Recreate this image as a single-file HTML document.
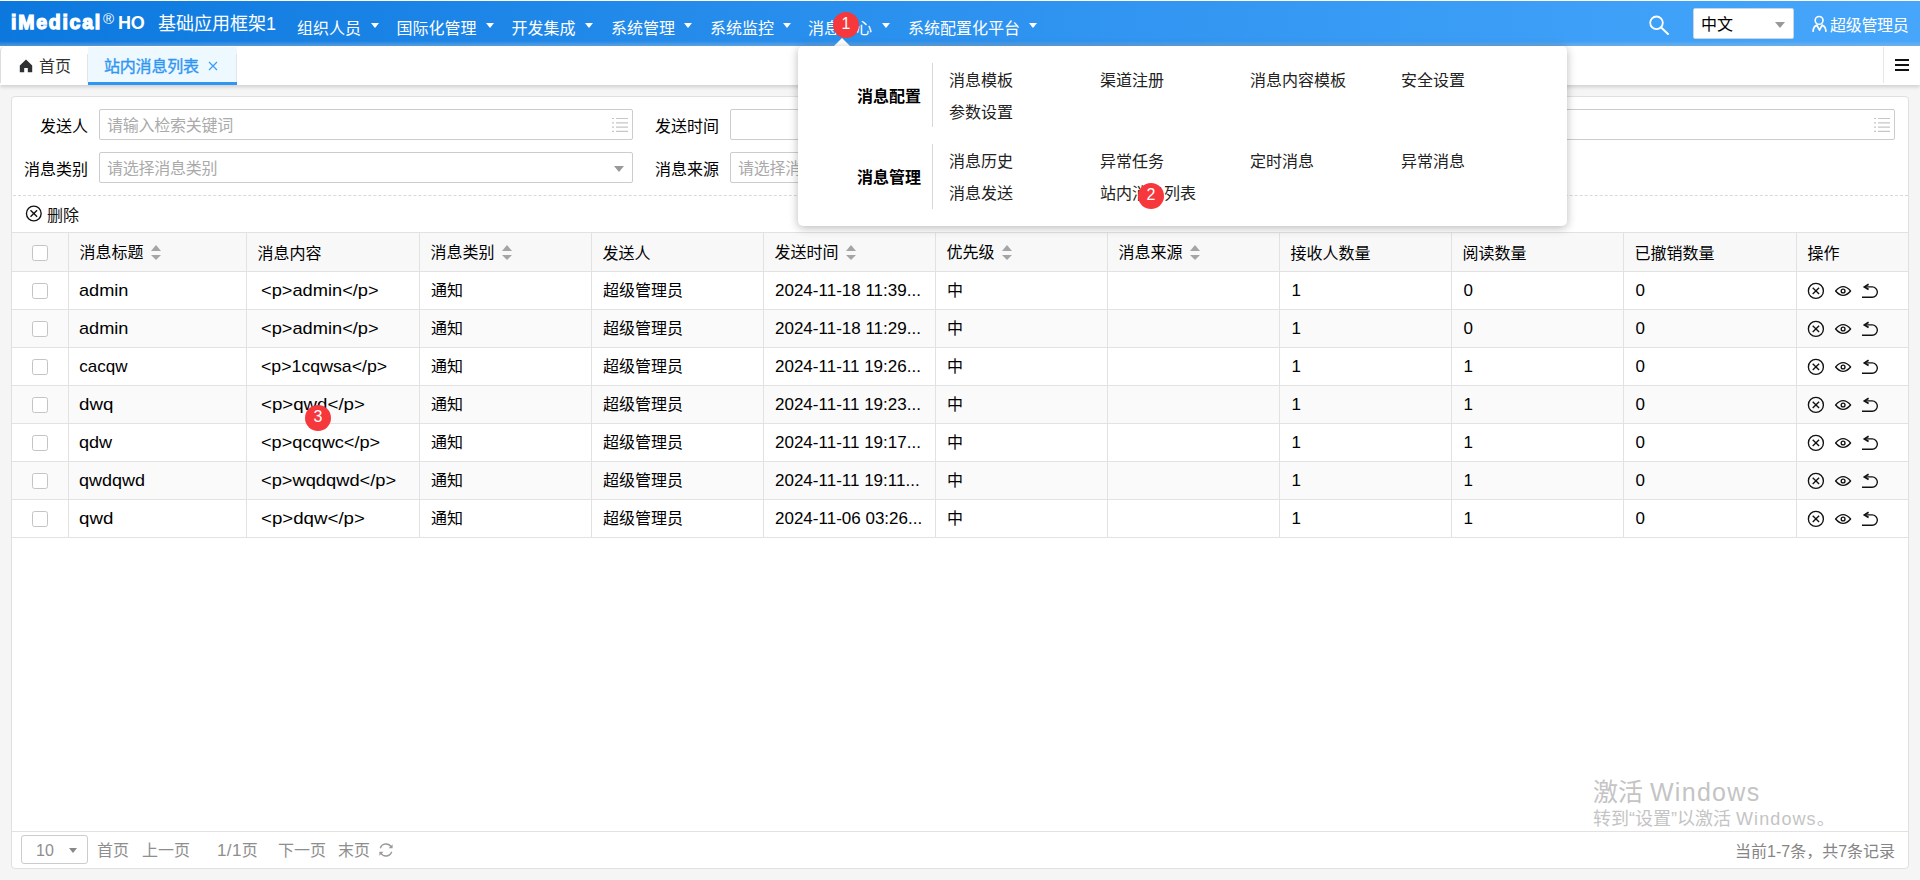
<!DOCTYPE html>
<html lang="zh-CN">
<head>
<meta charset="utf-8">
<title>站内消息列表</title>
<style>
*{box-sizing:border-box;margin:0;padding:0}
html,body{width:1920px;height:880px;overflow:hidden}
body{position:relative;background:#f5f5f5;font-family:"Liberation Sans","Noto Sans CJK SC",sans-serif;font-size:16px;color:#000;line-height:1}
.abs{position:absolute;white-space:nowrap}
/* header */
#hd{position:absolute;left:0;top:0;width:1920px;height:46px;background:linear-gradient(90deg,#0c78de 0%,#2a90ee 45%,#46a6fb 100%);color:#fff}
#hd .nav{position:absolute;top:20px;height:18px;line-height:18px;font-size:16px;white-space:nowrap}
#hd .car{position:absolute;top:23px;width:0;height:0;border-left:4.5px solid transparent;border-right:4.5px solid transparent;border-top:5px solid #fff}
/* tabs */
#tabs{position:absolute;left:0;top:46px;width:1920px;height:39px;background:#fff;box-shadow:0 2px 4px rgba(0,0,0,.16)}
/* panel */
#panel{position:absolute;left:11px;top:96px;width:1898px;height:773px;background:#fff;border:1px solid #e0e0e0;border-radius:4px}
.inp{position:absolute;height:31px;border:1px solid #ccc;border-radius:2px;background:#fff}
.lbl{position:absolute;height:20px;line-height:20px;font-size:16px;text-align:right;white-space:nowrap}
.ph{position:absolute;left:7px;top:7px;line-height:18px;font-size:16px;color:#aaa;letter-spacing:-0.25px;white-space:nowrap}
/* table */
.hl{position:absolute;left:12px;width:1896px;height:1px;background:#e2e2e2}
.vl{position:absolute;top:233px;width:1px;height:305px;background:#e2e2e2}
.row{position:absolute;left:12px;width:1896px;height:37px}
.cell{position:absolute;height:20px;line-height:20px;font-size:16px;white-space:nowrap}
.lt{font-size:17px;transform-origin:0 50%}
.cb{position:absolute;left:32px;width:16px;height:16px;border:1px solid #c4c4c4;border-radius:2.5px;background:#fff}
.sort{position:absolute;width:10px;height:15px}
.sort:before{content:"";position:absolute;left:0;top:0;border-left:5px solid transparent;border-right:5px solid transparent;border-bottom:6px solid #a5a5a5}
.sort:after{content:"";position:absolute;left:0;top:10px;border-left:5px solid transparent;border-right:5px solid transparent;border-top:5px solid #a5a5a5}
.badge{position:absolute;width:26px;height:26px;border-radius:13px;background:#f6373b;color:#fff;font-size:16px;line-height:24px;text-align:center}
/* popup */
#pop{position:absolute;left:798px;top:46px;width:769px;height:180px;color:#222;background:#fff;border-radius:5px;box-shadow:0 2px 10px rgba(0,0,0,.28)}
#pop .t{position:absolute;color:#000;font-weight:bold;font-size:16px;line-height:20px;white-space:nowrap}
#pop .i{position:absolute;font-size:16px;line-height:20px;white-space:nowrap}
#pop .d{position:absolute;left:134px;width:1px;background:#d8d8d8}
.pg{position:absolute;top:841px;height:20px;line-height:20px;font-size:16px;color:#8e8e8e;white-space:nowrap}
</style>
</head>
<body>
<!-- HEADER -->
<div id="hd">
  <div class="abs" id="logo1" style="left:11px;top:9.5px;font-size:19.5px;line-height:24px;font-weight:bold;letter-spacing:1.75px;-webkit-text-stroke:1.25px #fff">iMedical</div>
  <div class="abs" id="logo2" style="left:103px;top:11px;font-size:15px;line-height:16px">®</div>
  <div class="abs" id="logo3" style="left:118px;top:14px;font-size:18px;line-height:18px;font-weight:bold;letter-spacing:-0.3px">HO</div>
  <div class="abs" id="title" style="left:158px;top:13px;font-size:18px;line-height:22px">基础应用框架1</div>
  <div class="nav" style="left:297px">组织人员</div><div class="car" style="left:370.5px"></div>
  <div class="nav" style="left:396.5px">国际化管理</div><div class="car" style="left:486px"></div>
  <div class="nav" style="left:511.5px">开发集成</div><div class="car" style="left:584.5px"></div>
  <div class="nav" style="left:611px">系统管理</div><div class="car" style="left:684px"></div>
  <div class="nav" style="left:710px">系统监控</div><div class="car" style="left:783px"></div>
  <div class="nav" style="left:808px">消息中心</div><div class="car" style="left:882px"></div>
  <div class="nav" style="left:908px">系统配置化平台</div><div class="car" style="left:1028.5px"></div>
  <svg class="abs" style="left:1648px;top:14px" width="22" height="22" viewBox="0 0 22 22"><circle cx="8.5" cy="8.8" r="6.3" fill="none" stroke="#fff" stroke-width="1.8"/><path d="M13.2 13.6 L20 20" stroke="#fff" stroke-width="2" stroke-linecap="round"/></svg>
  <div class="abs" style="left:1693px;top:8px;width:101px;height:31px;background:#fff;border:1px solid #c9d6e2;border-radius:2px"></div>
  <div class="abs" style="left:1701px;top:15px;font-size:16px;line-height:20px;color:#000">中文</div>
  <div class="abs" style="left:1775px;top:22px;width:0;height:0;border-left:5px solid transparent;border-right:5px solid transparent;border-top:6px solid #999"></div>
  <svg class="abs" style="left:1806px;top:12px" width="28" height="24" viewBox="0 0 28 24"><circle cx="13.1" cy="8.4" r="3.9" fill="none" stroke="#fff" stroke-width="1.6"/><path d="M7 19.9 C7.2 16 8.8 13.8 10.9 13.1 L13.5 18.2 L16.1 13.1 C18.2 13.8 19.8 16 20 19.9" fill="none" stroke="#fff" stroke-width="1.65" stroke-linejoin="round"/></svg>
  <div class="abs" style="left:1830px;top:16px;font-size:16px;line-height:20px;letter-spacing:-0.3px">超级管理员</div>
</div>
<div class="abs" style="left:0;top:0;width:1920px;height:1px;background:#fff"></div>
<div class="abs" style="left:0;top:41px;width:1920px;height:5px;background:linear-gradient(180deg,rgba(175,195,215,0),rgba(175,195,215,.44))"></div>
<!-- TABS -->
<div id="tabs">
  <div class="abs" style="left:0;top:1px;width:8px;height:36px;border-left:1px solid #ddd;border-top-left-radius:4px"></div>
  <svg class="abs" style="left:19px;top:13px" width="14" height="14" viewBox="0 0 14 14"><path d="M7 0.6 L13.2 6.6 V13.2 H8.8 V9 H5.2 V13.2 H0.8 V6.6 Z" fill="#303133"/></svg>
  <div class="abs" style="left:39px;top:11px;font-size:16px;line-height:20px;color:#333">首页</div>
  <div class="abs" style="left:87px;top:8px;width:1px;height:28px;background:#e4e4e4"></div>
  <div class="abs" style="left:88px;top:1px;width:149px;height:38px;background:#eef8ff;border-bottom:3px solid #2f96f3"></div>
  <div class="abs" style="left:236px;top:8px;width:1px;height:28px;background:#e4e4e4"></div>
  <div class="abs" style="left:104px;top:11px;font-size:16px;line-height:20px;color:#2f96f3;letter-spacing:-0.2px;-webkit-text-stroke:0.35px #2f96f3">站内消息列表</div>
  <svg class="abs" style="left:208px;top:15px" width="10" height="10" viewBox="0 0 10 10"><path d="M1 1 L9 9 M9 1 L1 9" stroke="#3a9bf2" stroke-width="1.2"/></svg>
  <div class="abs" style="left:1883px;top:1px;width:1px;height:36px;background:#e6e6e6"></div>
  <div class="abs" style="left:1895px;top:13px;width:14px;height:2.4px;background:#111"></div>
  <div class="abs" style="left:1895px;top:18px;width:14px;height:2.4px;background:#111"></div>
  <div class="abs" style="left:1895px;top:23px;width:14px;height:2.4px;background:#111"></div>
</div>
<!-- PANEL -->
<div id="panel"></div>
<div id="form">
  <div class="lbl" style="left:20px;width:68px;top:117px">发送人</div>
  <div class="inp" style="left:99px;top:109px;width:534px"><div class="ph">请输入检索关键词</div>
    <svg class="abs" style="left:511px;top:6px" width="18" height="18" viewBox="0 0 18 18"><g stroke="#c6c6c6" stroke-width="1.2"><path d="M5 2.5H17M5 6.8H17M5 11.1H17M5 15.4H17"/><path d="M1 2.5H3M1 6.8H3M1 11.1H3M1 15.4H3"/></g></svg></div>
  <div class="lbl" style="left:20px;width:68px;top:160px">消息类别</div>
  <div class="inp" style="left:99px;top:152px;width:534px"><div class="ph">请选择消息类别</div>
    <div class="abs" style="left:514px;top:13px;width:0;height:0;border-left:5px solid transparent;border-right:5px solid transparent;border-top:6px solid #999"></div></div>
  <div class="lbl" style="left:651px;width:68px;top:117px">发送时间</div>
  <div class="inp" style="left:730px;top:109px;width:534px"></div>
  <div class="lbl" style="left:651px;width:68px;top:160px">消息来源</div>
  <div class="inp" style="left:730px;top:152px;width:534px"><div class="ph">请选择消息来源</div>
    <div class="abs" style="left:514px;top:13px;width:0;height:0;border-left:5px solid transparent;border-right:5px solid transparent;border-top:6px solid #999"></div></div>
  <div class="inp" style="left:1361px;top:109px;width:534px">
    <svg class="abs" style="left:511px;top:6px" width="18" height="18" viewBox="0 0 18 18"><g stroke="#c6c6c6" stroke-width="1.2"><path d="M5 2.5H17M5 6.8H17M5 11.1H17M5 15.4H17"/><path d="M1 2.5H3M1 6.8H3M1 11.1H3M1 15.4H3"/></g></svg></div>
  <div class="abs" style="left:13px;top:195px;width:1895px;height:0;border-top:1px dashed #d9d9d9"></div>
  <svg class="abs" style="left:25px;top:205px" width="17" height="17" viewBox="0 0 17 17"><circle cx="8.8" cy="8.5" r="7.35" fill="none" stroke="#111" stroke-width="1.35"/><path d="M5.5 5.2 L12.1 11.8 M12.1 5.2 L5.5 11.8" stroke="#111" stroke-width="1.35"/></svg>
  <div class="abs" style="left:47px;top:206px;font-size:16px;line-height:20px;color:#111">删除</div>
</div>
<div id="table">
<div class="row" style="top:233px;height:38px;background:#f8f8f8"></div>
<div class="row" style="top:272px;background:#fff"></div>
<div class="row" style="top:310px;background:#fafafa"></div>
<div class="row" style="top:348px;background:#fff"></div>
<div class="row" style="top:386px;background:#fafafa"></div>
<div class="row" style="top:424px;background:#fff"></div>
<div class="row" style="top:462px;background:#fafafa"></div>
<div class="row" style="top:500px;background:#fff"></div>
<div class="hl" style="top:232px"></div>
<div class="hl" style="top:271px"></div>
<div class="hl" style="top:309px"></div>
<div class="hl" style="top:347px"></div>
<div class="hl" style="top:385px"></div>
<div class="hl" style="top:423px"></div>
<div class="hl" style="top:461px"></div>
<div class="hl" style="top:499px"></div>
<div class="hl" style="top:537px"></div>
<div class="vl" style="left:68px"></div>
<div class="vl" style="left:246px"></div>
<div class="vl" style="left:419px"></div>
<div class="vl" style="left:591px"></div>
<div class="vl" style="left:763px"></div>
<div class="vl" style="left:935px"></div>
<div class="vl" style="left:1107px"></div>
<div class="vl" style="left:1279px"></div>
<div class="vl" style="left:1451px"></div>
<div class="vl" style="left:1623px"></div>
<div class="vl" style="left:1796px"></div>
<div class="cb" style="top:245px"></div>
<div class="cell hc" style="left:79.5px;top:242.5px">消息标题</div>
<div class="sort" style="left:151px;top:245px"></div>
<div class="cell hc" style="left:257.5px;top:243.5px">消息内容</div>
<div class="cell hc" style="left:430.5px;top:242.5px">消息类别</div>
<div class="sort" style="left:502px;top:245px"></div>
<div class="cell hc" style="left:602.5px;top:243.5px">发送人</div>
<div class="cell hc" style="left:774.5px;top:242.5px">发送时间</div>
<div class="sort" style="left:846px;top:245px"></div>
<div class="cell hc" style="left:946.5px;top:242.5px">优先级</div>
<div class="sort" style="left:1002px;top:245px"></div>
<div class="cell hc" style="left:1118.5px;top:242.5px">消息来源</div>
<div class="sort" style="left:1190px;top:245px"></div>
<div class="cell hc" style="left:1290.5px;top:243.5px">接收人数量</div>
<div class="cell hc" style="left:1462.5px;top:243.5px">阅读数量</div>
<div class="cell hc" style="left:1634.5px;top:243.5px">已撤销数量</div>
<div class="cell hc" style="left:1807.5px;top:243.5px">操作</div>
<div class="cb" style="top:283px"></div>
<div class="cell lt" id="c0_0" style="left:79.3px;top:281px;transform:scaleX(1.068)">admin</div>
<div class="cell lt" id="c0_1" style="left:260.5px;top:281px;transform:scaleX(1.073)">&lt;p&gt;admin&lt;/p&gt;</div>
<div class="cell lt" id="c0_4" style="left:775px;top:281px;transform:scaleX(1)">2024-11-18 11:39...</div>
<div class="cell lt" id="c0_7" style="left:1291.5px;top:281px;transform:scaleX(1)">1</div>
<div class="cell lt" id="c0_8" style="left:1463.5px;top:281px;transform:scaleX(1)">0</div>
<div class="cell lt" id="c0_9" style="left:1635.5px;top:281px;transform:scaleX(1)">0</div>
<div class="cell" style="left:431px;top:281px">通知</div>
<div class="cell" style="left:603px;top:281px">超级管理员</div>
<div class="cell" style="left:947px;top:281px">中</div>
<svg class="abs" style="left:1807px;top:282px" width="72" height="18" viewBox="0 0 72 18"><g fill="none" stroke="#111" stroke-width="1.35"><circle cx="8.9" cy="8.9" r="7.5"/><path d="M5.7 5.7 L12.1 12.1 M12.1 5.7 L5.7 12.1"/><path d="M28.6 9 Q36.1 0.2 43.6 9 Q36.1 17.8 28.6 9 Z" stroke-linejoin="round"/><circle cx="36.1" cy="9" r="1.9"/><path d="M55 15.2 H65.2 A5.15 5.15 0 0 0 65.2 4.9 H58"/><path d="M61.6 2.3 L57.4 4.9 L61.6 7.5" stroke-width="1.7"/></g></svg>
<div class="cb" style="top:321px"></div>
<div class="cell lt" id="c1_0" style="left:79.3px;top:319px;transform:scaleX(1.068)">admin</div>
<div class="cell lt" id="c1_1" style="left:260.5px;top:319px;transform:scaleX(1.073)">&lt;p&gt;admin&lt;/p&gt;</div>
<div class="cell lt" id="c1_4" style="left:775px;top:319px;transform:scaleX(1)">2024-11-18 11:29...</div>
<div class="cell lt" id="c1_7" style="left:1291.5px;top:319px;transform:scaleX(1)">1</div>
<div class="cell lt" id="c1_8" style="left:1463.5px;top:319px;transform:scaleX(1)">0</div>
<div class="cell lt" id="c1_9" style="left:1635.5px;top:319px;transform:scaleX(1)">0</div>
<div class="cell" style="left:431px;top:319px">通知</div>
<div class="cell" style="left:603px;top:319px">超级管理员</div>
<div class="cell" style="left:947px;top:319px">中</div>
<svg class="abs" style="left:1807px;top:320px" width="72" height="18" viewBox="0 0 72 18"><g fill="none" stroke="#111" stroke-width="1.35"><circle cx="8.9" cy="8.9" r="7.5"/><path d="M5.7 5.7 L12.1 12.1 M12.1 5.7 L5.7 12.1"/><path d="M28.6 9 Q36.1 0.2 43.6 9 Q36.1 17.8 28.6 9 Z" stroke-linejoin="round"/><circle cx="36.1" cy="9" r="1.9"/><path d="M55 15.2 H65.2 A5.15 5.15 0 0 0 65.2 4.9 H58"/><path d="M61.6 2.3 L57.4 4.9 L61.6 7.5" stroke-width="1.7"/></g></svg>
<div class="cb" style="top:359px"></div>
<div class="cell lt" id="c2_0" style="left:79.3px;top:357px;transform:scaleX(1.0)">cacqw</div>
<div class="cell lt" id="c2_1" style="left:260.5px;top:357px;transform:scaleX(1.043)">&lt;p&gt;1cqwsa&lt;/p&gt;</div>
<div class="cell lt" id="c2_4" style="left:775px;top:357px;transform:scaleX(1)">2024-11-11 19:26...</div>
<div class="cell lt" id="c2_7" style="left:1291.5px;top:357px;transform:scaleX(1)">1</div>
<div class="cell lt" id="c2_8" style="left:1463.5px;top:357px;transform:scaleX(1)">1</div>
<div class="cell lt" id="c2_9" style="left:1635.5px;top:357px;transform:scaleX(1)">0</div>
<div class="cell" style="left:431px;top:357px">通知</div>
<div class="cell" style="left:603px;top:357px">超级管理员</div>
<div class="cell" style="left:947px;top:357px">中</div>
<svg class="abs" style="left:1807px;top:358px" width="72" height="18" viewBox="0 0 72 18"><g fill="none" stroke="#111" stroke-width="1.35"><circle cx="8.9" cy="8.9" r="7.5"/><path d="M5.7 5.7 L12.1 12.1 M12.1 5.7 L5.7 12.1"/><path d="M28.6 9 Q36.1 0.2 43.6 9 Q36.1 17.8 28.6 9 Z" stroke-linejoin="round"/><circle cx="36.1" cy="9" r="1.9"/><path d="M55 15.2 H65.2 A5.15 5.15 0 0 0 65.2 4.9 H58"/><path d="M61.6 2.3 L57.4 4.9 L61.6 7.5" stroke-width="1.7"/></g></svg>
<div class="cb" style="top:397px"></div>
<div class="cell lt" id="c3_0" style="left:79.3px;top:395px;transform:scaleX(1.1)">dwq</div>
<div class="cell lt" id="c3_1" style="left:260.5px;top:395px;transform:scaleX(1.099)">&lt;p&gt;qwd&lt;/p&gt;</div>
<div class="cell lt" id="c3_4" style="left:775px;top:395px;transform:scaleX(1)">2024-11-11 19:23...</div>
<div class="cell lt" id="c3_7" style="left:1291.5px;top:395px;transform:scaleX(1)">1</div>
<div class="cell lt" id="c3_8" style="left:1463.5px;top:395px;transform:scaleX(1)">1</div>
<div class="cell lt" id="c3_9" style="left:1635.5px;top:395px;transform:scaleX(1)">0</div>
<div class="cell" style="left:431px;top:395px">通知</div>
<div class="cell" style="left:603px;top:395px">超级管理员</div>
<div class="cell" style="left:947px;top:395px">中</div>
<svg class="abs" style="left:1807px;top:396px" width="72" height="18" viewBox="0 0 72 18"><g fill="none" stroke="#111" stroke-width="1.35"><circle cx="8.9" cy="8.9" r="7.5"/><path d="M5.7 5.7 L12.1 12.1 M12.1 5.7 L5.7 12.1"/><path d="M28.6 9 Q36.1 0.2 43.6 9 Q36.1 17.8 28.6 9 Z" stroke-linejoin="round"/><circle cx="36.1" cy="9" r="1.9"/><path d="M55 15.2 H65.2 A5.15 5.15 0 0 0 65.2 4.9 H58"/><path d="M61.6 2.3 L57.4 4.9 L61.6 7.5" stroke-width="1.7"/></g></svg>
<div class="cb" style="top:435px"></div>
<div class="cell lt" id="c4_0" style="left:79.3px;top:433px;transform:scaleX(1.063)">qdw</div>
<div class="cell lt" id="c4_1" style="left:260.5px;top:433px;transform:scaleX(1.069)">&lt;p&gt;qcqwc&lt;/p&gt;</div>
<div class="cell lt" id="c4_4" style="left:775px;top:433px;transform:scaleX(1)">2024-11-11 19:17...</div>
<div class="cell lt" id="c4_7" style="left:1291.5px;top:433px;transform:scaleX(1)">1</div>
<div class="cell lt" id="c4_8" style="left:1463.5px;top:433px;transform:scaleX(1)">1</div>
<div class="cell lt" id="c4_9" style="left:1635.5px;top:433px;transform:scaleX(1)">0</div>
<div class="cell" style="left:431px;top:433px">通知</div>
<div class="cell" style="left:603px;top:433px">超级管理员</div>
<div class="cell" style="left:947px;top:433px">中</div>
<svg class="abs" style="left:1807px;top:434px" width="72" height="18" viewBox="0 0 72 18"><g fill="none" stroke="#111" stroke-width="1.35"><circle cx="8.9" cy="8.9" r="7.5"/><path d="M5.7 5.7 L12.1 12.1 M12.1 5.7 L5.7 12.1"/><path d="M28.6 9 Q36.1 0.2 43.6 9 Q36.1 17.8 28.6 9 Z" stroke-linejoin="round"/><circle cx="36.1" cy="9" r="1.9"/><path d="M55 15.2 H65.2 A5.15 5.15 0 0 0 65.2 4.9 H58"/><path d="M61.6 2.3 L57.4 4.9 L61.6 7.5" stroke-width="1.7"/></g></svg>
<div class="cb" style="top:473px"></div>
<div class="cell lt" id="c5_0" style="left:79.3px;top:471px;transform:scaleX(1.057)">qwdqwd</div>
<div class="cell lt" id="c5_1" style="left:260.5px;top:471px;transform:scaleX(1.075)">&lt;p&gt;wqdqwd&lt;/p&gt;</div>
<div class="cell lt" id="c5_4" style="left:775px;top:471px;transform:scaleX(1)">2024-11-11 19:11...</div>
<div class="cell lt" id="c5_7" style="left:1291.5px;top:471px;transform:scaleX(1)">1</div>
<div class="cell lt" id="c5_8" style="left:1463.5px;top:471px;transform:scaleX(1)">1</div>
<div class="cell lt" id="c5_9" style="left:1635.5px;top:471px;transform:scaleX(1)">0</div>
<div class="cell" style="left:431px;top:471px">通知</div>
<div class="cell" style="left:603px;top:471px">超级管理员</div>
<div class="cell" style="left:947px;top:471px">中</div>
<svg class="abs" style="left:1807px;top:472px" width="72" height="18" viewBox="0 0 72 18"><g fill="none" stroke="#111" stroke-width="1.35"><circle cx="8.9" cy="8.9" r="7.5"/><path d="M5.7 5.7 L12.1 12.1 M12.1 5.7 L5.7 12.1"/><path d="M28.6 9 Q36.1 0.2 43.6 9 Q36.1 17.8 28.6 9 Z" stroke-linejoin="round"/><circle cx="36.1" cy="9" r="1.9"/><path d="M55 15.2 H65.2 A5.15 5.15 0 0 0 65.2 4.9 H58"/><path d="M61.6 2.3 L57.4 4.9 L61.6 7.5" stroke-width="1.7"/></g></svg>
<div class="cb" style="top:511px"></div>
<div class="cell lt" id="c6_0" style="left:79.3px;top:509px;transform:scaleX(1.1)">qwd</div>
<div class="cell lt" id="c6_1" style="left:260.5px;top:509px;transform:scaleX(1.099)">&lt;p&gt;dqw&lt;/p&gt;</div>
<div class="cell lt" id="c6_4" style="left:775px;top:509px;transform:scaleX(1)">2024-11-06 03:26...</div>
<div class="cell lt" id="c6_7" style="left:1291.5px;top:509px;transform:scaleX(1)">1</div>
<div class="cell lt" id="c6_8" style="left:1463.5px;top:509px;transform:scaleX(1)">1</div>
<div class="cell lt" id="c6_9" style="left:1635.5px;top:509px;transform:scaleX(1)">0</div>
<div class="cell" style="left:431px;top:509px">通知</div>
<div class="cell" style="left:603px;top:509px">超级管理员</div>
<div class="cell" style="left:947px;top:509px">中</div>
<svg class="abs" style="left:1807px;top:510px" width="72" height="18" viewBox="0 0 72 18"><g fill="none" stroke="#111" stroke-width="1.35"><circle cx="8.9" cy="8.9" r="7.5"/><path d="M5.7 5.7 L12.1 12.1 M12.1 5.7 L5.7 12.1"/><path d="M28.6 9 Q36.1 0.2 43.6 9 Q36.1 17.8 28.6 9 Z" stroke-linejoin="round"/><circle cx="36.1" cy="9" r="1.9"/><path d="M55 15.2 H65.2 A5.15 5.15 0 0 0 65.2 4.9 H58"/><path d="M61.6 2.3 L57.4 4.9 L61.6 7.5" stroke-width="1.7"/></g></svg>
</div><!--/table-->
<div id="pager">
  <div class="hl" style="top:831px"></div>
  <div class="abs" style="left:21px;top:835px;width:67px;height:29px;border:1px solid #ccc;border-radius:3px;background:#fff"></div>
  <div class="pg" style="left:36px">10</div>
  <div class="abs" style="left:69px;top:848px;width:0;height:0;border-left:4.5px solid transparent;border-right:4.5px solid transparent;border-top:5px solid #888"></div>
  <div class="pg" style="left:97px">首页</div>
  <div class="pg" style="left:142px">上一页</div>
  <div class="pg" style="left:217px"><span style="font-size:17px;letter-spacing:0.4px">1/1</span>页</div>
  <div class="pg" style="left:278px">下一页</div>
  <div class="pg" style="left:338px">末页</div>
  <svg class="abs" style="left:378px;top:842px" width="16" height="16" viewBox="0 0 16 16"><g fill="none" stroke="#9a9a9a" stroke-width="1.4"><path d="M2.3 6.2 A6 6 0 0 1 13.2 5"/><path d="M13.7 9.8 A6 6 0 0 1 2.8 11"/></g><path d="M14.6 2.2 V6.2 H10.6 Z M1.4 13.8 V9.8 H5.4 Z" fill="#9a9a9a"/></svg>
  <div class="pg" style="left:1735px;top:842px;color:#858585">当前1-7条，共7条记录</div>
  <div class="abs" style="left:1593px;top:778px;font-size:25px;line-height:28px;color:#c4c4c4">激活 <span style="letter-spacing:1.3px">Windows</span></div>
  <div class="abs" style="left:1593px;top:808px;font-size:18px;line-height:22px;color:#c4c4c4">转到“设置”以激活 <span style="letter-spacing:1.1px">Windows</span>。</div>
</div>
<div id="popwrap">
  <div class="abs" style="left:833.5px;top:38px;width:0;height:0;border-left:8px solid transparent;border-right:8px solid transparent;border-bottom:8px solid #fff"></div>
  <div id="pop">
    <div class="t" style="left:59px;top:41px">消息配置</div>
    <div class="d" style="top:17px;height:64px"></div>
    <div class="i" style="left:151px;top:25px">消息模板</div>
    <div class="i" style="left:302px;top:25px">渠道注册</div>
    <div class="i" style="left:452px;top:25px">消息内容模板</div>
    <div class="i" style="left:603px;top:25px">安全设置</div>
    <div class="i" style="left:151px;top:57px">参数设置</div>
    <div class="t" style="left:59px;top:122px">消息管理</div>
    <div class="d" style="top:98px;height:65px"></div>
    <div class="i" style="left:151px;top:106px">消息历史</div>
    <div class="i" style="left:302px;top:106px">异常任务</div>
    <div class="i" style="left:452px;top:106px">定时消息</div>
    <div class="i" style="left:603px;top:106px">异常消息</div>
    <div class="i" style="left:151px;top:138px">消息发送</div>
    <div class="i" style="left:302px;top:138px">站内消息列表</div>
  </div>
  <div class="badge" style="left:833px;top:12px">1</div>
  <div class="badge" style="left:1138px;top:183px">2</div>
  <div class="badge" style="left:305px;top:405px">3</div>
</div>
</body>
</html>
